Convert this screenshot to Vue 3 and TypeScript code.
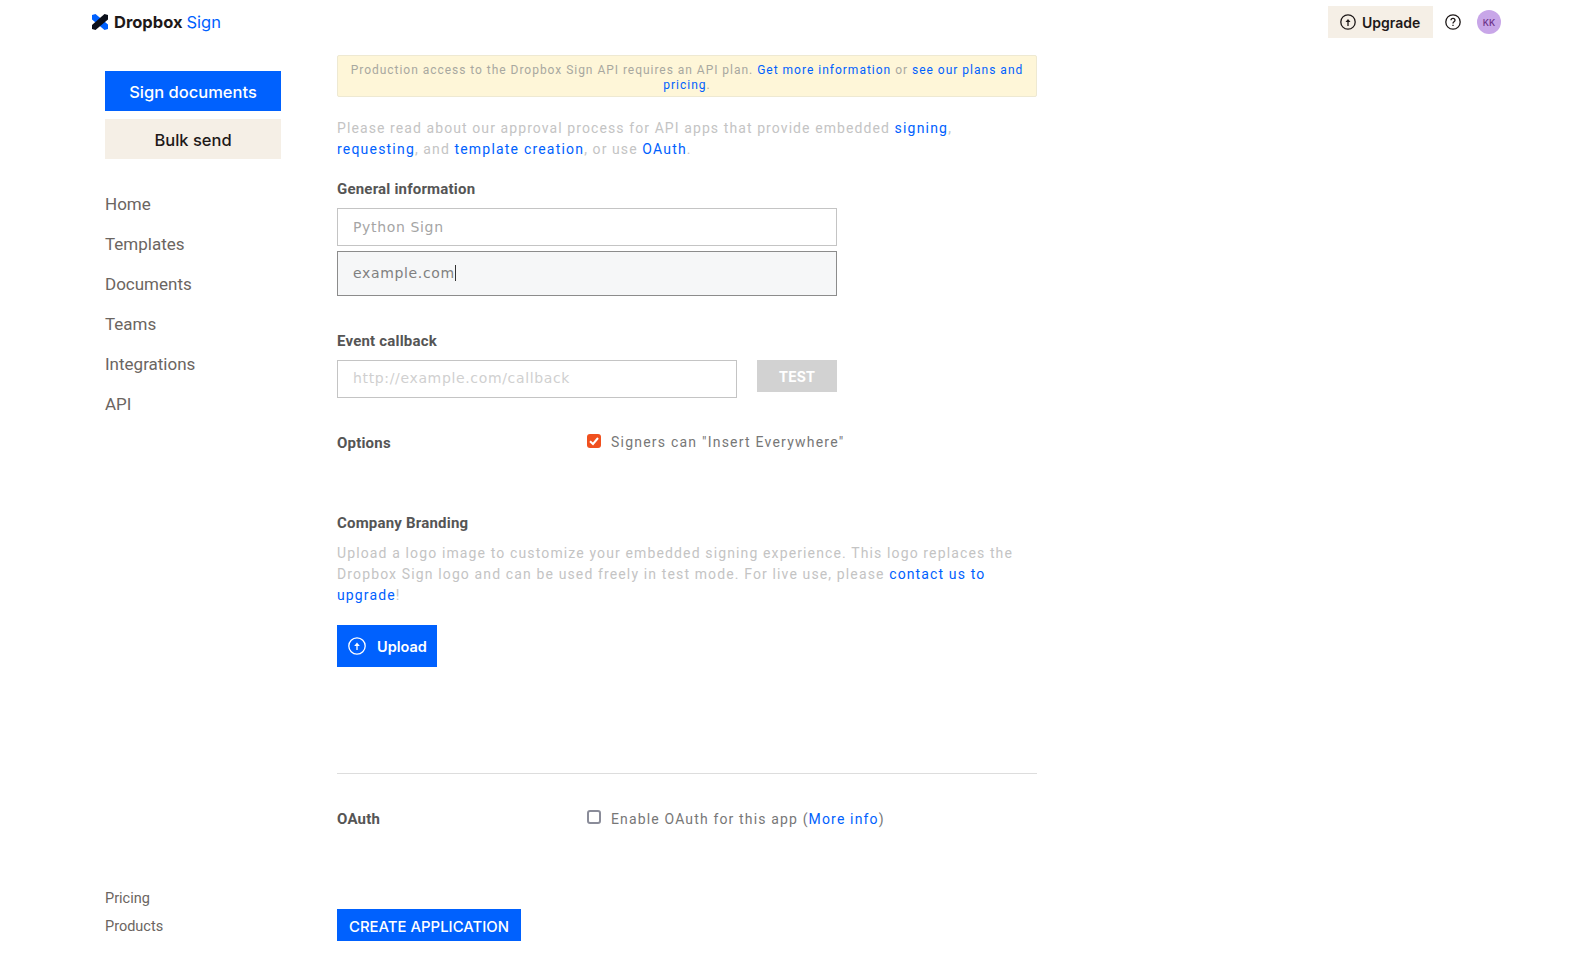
<script setup lang="ts">
const navItems: string[] = ['Home', 'Templates', 'Documents', 'Teams', 'Integrations', 'API']
</script>

<template>
  <div class="page">
    <header class="top">
      <div class="brand">
        <svg class="logo" viewBox="0 0 16 16" width="16" height="16">
          <path d="M0 1 3.500 0 16 10.500V15l-3.500 1L0 5.500z" fill="#0061fe" />
          <path d="M0 11 12.500 0 16 1v4.500L3.500 16 0 15z" fill="#0b0f1a" />
        </svg>
        <span class="b1">Dropbox</span><span class="b2">Sign</span>
      </div>
      <div class="top-right">
        <button class="upgrade">
          <svg viewBox="0 0 16 16" width="16" height="16" fill="none" stroke="#1e1919" stroke-width="1.3">
            <circle cx="8" cy="8" r="7.200" /><path d="M8 12V6" /><path d="M5.500 8 8 5l2.500 3z" fill="#1e1919" stroke="none" />
          </svg>
          Upgrade
        </button>
        <svg class="help" viewBox="0 0 16 16" width="16" height="16" fill="none" stroke="#1e1919" stroke-width="1.3">
          <circle cx="8" cy="8" r="7.200" /><path d="M6 6.300c0-2.600 4-2.600 4 0 0 1.600-2 1.500-2 3.200M8 10.700v1.300" />
        </svg>
        <div class="avatar">KK</div>
      </div>
    </header>
    <div class="body">
      <aside class="side">
        <button class="primary-side">Sign documents</button>
        <button class="bulk">Bulk send</button>
        <nav class="nav"><a v-for="n in navItems" :key="n">{{ n }}</a></nav>
        <div class="foot"><a>Pricing</a><a>Products</a></div>
      </aside>
      <main class="main">
        <div class="notice">Production access to the Dropbox Sign API requires an API plan. <a>Get more information</a> or <a>see our plans and pricing</a>.</div>
        <p class="para intro">Please read about our approval process for API apps that provide embedded <a>signing</a>,<br /><a>requesting</a>, and <a>template creation</a>, or use <a>OAuth</a>.</p>
        <h3 class="h general">General information</h3>
        <input class="inp wide" placeholder="Python Sign" />
        <div class="inp wide focus">example.com<span class="caret"></span></div>
        <h3 class="h event">Event callback</h3>
        <div class="cb-row">
          <input class="inp narrow" placeholder="http://example.com/callback" />
          <button class="test">TEST</button>
        </div>
        <div class="opt options">
          <h3 class="h lbl">Options</h3>
          <label class="chk"><span class="box on"><svg viewBox="0 0 14 14" width="14" height="14" fill="none" stroke="#fff" stroke-width="2"><path d="M3 7.200 6 10l5-6" /></svg></span>Signers can "Insert Everywhere"</label>
        </div>
        <h3 class="h brandh">Company Branding</h3>
        <p class="para brandp">Upload a logo image to customize your embedded signing experience. This logo replaces the Dropbox Sign logo and can be used freely in test mode. For live use, please <a>contact us to upgrade</a>!</p>
        <button class="upload">
          <svg viewBox="0 0 18 18" width="18" height="18" fill="none" stroke="#fff" stroke-width="1.300"><circle cx="9" cy="9" r="8.200" /><path d="M9 13V7" /><path d="M6.200 9 9 5.500 11.800 9z" fill="#fff" stroke="none" /></svg>
          Upload
        </button>
        <hr class="rule" />
        <div class="opt oauth">
          <h3 class="h lbl">OAuth</h3>
          <label class="chk"><span class="box"></span><span>Enable OAuth for this app (<a>More info</a>)</span></label>
        </div>
        <button class="create">CREATE APPLICATION</button>
      </main>
    </div>
  </div>
</template>

<style>
html, body { margin: 0; background: #fff; }
</style>

<style scoped>
.page { width: 1584px; height: 965px; overflow: hidden; font-family: Roboto, "Liberation Sans", sans-serif; color: #637282; position: relative; }
a { color: #0061fe; cursor: pointer; }
button { font-family: Inter, sans-serif; border: 0; cursor: pointer; }
.top { height: 44px; display: flex; justify-content: space-between; align-items: center; padding: 0 83px 0 92px; }
.brand { display: flex; align-items: center; font-family: Inter, sans-serif; font-size: 16.500px; }
.logo { margin-right: 6px; }
.b1 { font-weight: 700; color: #1e1919; margin-right: 4px; }
.b2 { color: #0061fe; }
.top-right { display: flex; align-items: center; }
.upgrade { display: flex; align-items: center; gap: 6px; height: 32px; width: 105px; padding: 0 0 0 12px; background: #f5efe6; color: #1e1919; font-size: 14px; font-weight: 600; }
.help { margin-left: 12px; }
.avatar { margin-left: 16px; width: 24px; height: 24px; border-radius: 50%; background: #c8a6e8; color: #6b2f86; font-size: 9px; font-family: Inter, sans-serif; font-weight: 500; display: flex; align-items: center; justify-content: center; }
.body { display: flex; padding-left: 105px; }
.side { width: 176px; height: 921px; position: relative; padding-top: 27px; box-sizing: border-box; margin-right: 56px; flex: none; }
.primary-side { display: block; width: 176px; height: 40px; padding: 1px 0 0; background: #0061fe; color: #fff; font-size: 16.500px; font-weight: 500; }
.bulk { display: block; width: 176px; height: 40px; padding: 1px 0 0; margin-top: 8px; background: #f5efe6; color: #1e1919; font-size: 16.500px; font-weight: 500; }
.nav { display: flex; flex-direction: column; margin-top: 25px; }
.nav a { color: #6b6561; font-size: 17px; line-height: 40px; }
.foot { position: absolute; left: 0; top: 841px; display: flex; flex-direction: column; }
.foot a { color: #6b6561; font-size: 14.500px; line-height: 28px; }
.main { width: 700px; padding-top: 11px; }
.notice { box-sizing: border-box; height: 42px; background: #fef6d8; border: 1px solid #eee9d2; border-radius: 2px; padding: 7px 12px 0; text-align: center; font-size: 12px; line-height: 15px; letter-spacing: .97px; color: #a8a8a0; }
.notice a { letter-spacing: 1px; }
.para { margin: 0; font-size: 14px; line-height: 21px; color: #c4c4c4; }
.intro { margin-top: 21px; letter-spacing: 1.090px; }
.intro a { letter-spacing: 1.200px; }
.h { margin: 0; font-size: 15px; font-weight: 700; color: #555; line-height: 18px; letter-spacing: .2px; }
.general { margin-top: 20px; }
.inp { display: block; box-sizing: border-box; border: 1px solid #c4c4c4; background: #fff; font-family: "DejaVu Sans", sans-serif; font-size: 14px; padding: 0 15px; outline: 0; color: #808080; letter-spacing: .65px; }
.inp::placeholder { color: #a5a5a5; opacity: 1; }
.wide { width: 500px; height: 38px; margin-top: 10px; }
.focus { height: 45px; margin-top: 5px; background: #f6f7f8; border-color: #8c8c8c; line-height: 42px; }
.caret { display: inline-block; width: 1px; height: 16px; background: #333; vertical-align: -3px; }
.event { margin-top: 36px; }
.cb-row { display: flex; align-items: flex-start; margin-top: 10px; }
.narrow { width: 400px; height: 38px; padding-bottom: 2px; }
.narrow::placeholder { color: #d0d0d0; }
.test { width: 80px; height: 32px; margin-left: 20px; background: #d2d2d2; color: #fff; font-size: 14px; font-weight: 700; }
.opt { display: flex; align-items: center; }
.lbl { width: 250px; flex: none; position: relative; top: 1px; }
.options { margin-top: 35px; }
.chk { display: flex; align-items: center; font-size: 14px; letter-spacing: 1.150px; color: #777; }
.options .chk { letter-spacing: 1.220px; }
.box { box-sizing: border-box; width: 14px; height: 14px; border-radius: 3px; margin-right: 10px; border: 2px solid #8a8c99; display: block; position: relative; top: -2px; }
.box.on { background: #f0501e; border: 0; top: -1px; }
.box svg { display: block; }
.brandh { margin-top: 63px; }
.brandp { margin-top: 11px; letter-spacing: 1.130px; }
.upload { display: flex; align-items: center; gap: 11px; margin-top: 19px; height: 42px; width: 100px; padding: 0 0 0 11px; background: #0061fe; color: #fff; font-size: 14.500px; font-weight: 600; }
.rule { width: 700px; border: 0; border-top: 1px solid #ddd; margin: 106px 0 0; }
.oauth { margin-top: 36px; }
.oauth .lbl { top: 0; }
.create { display: block; margin-top: 81px; width: 184px; height: 32px; background: #0061fe; color: #fff; font-size: 14.900px; font-weight: 500; padding: 3px 0 0; }
</style>
